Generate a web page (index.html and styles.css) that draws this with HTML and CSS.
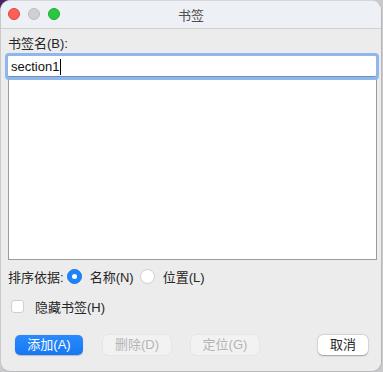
FILE: index.html
```html
<!DOCTYPE html>
<html lang="zh-CN">
<head>
<meta charset="utf-8">
<title>书签</title>
<link rel="stylesheet" href="styles.css">
</head>
<body>
<div class="window">
  <div class="titlebar">
    <div class="lights">
      <span class="light red"></span>
      <span class="light gray"></span>
      <span class="light green"></span>
    </div>
    <div class="title">书签</div>
  </div>
  <div class="content">
    <div class="label">书签名(B):</div>
    <div class="field"><span class="value">section1</span><span class="caret"></span></div>
    <div class="list"></div>
    <div class="sort-row">
      <span class="sort-label">排序依据:</span>
      <span class="radio checked"></span>
      <span class="opt">名称(N)</span>
      <span class="radio"></span>
      <span class="opt">位置(L)</span>
    </div>
    <div class="check-row">
      <span class="checkbox"></span>
      <span class="check-label">隐藏书签(H)</span>
    </div>
    <div class="buttons">
      <button class="btn primary">添加(A)</button>
      <button class="btn disabled">删除(D)</button>
      <button class="btn disabled">定位(G)</button>
      <button class="btn cancel">取消</button>
    </div>
  </div>
</div>
</body>
</html>
```
FILE: styles.css
```css
* { box-sizing: border-box; }
html, body {
  margin: 0;
  padding: 0;
  width: 383px;
  height: 372px;
  overflow: hidden;
  background: radial-gradient(circle at 0 0, #4b2166 7px, #c9c9cb 10px);
  font-family: "Liberation Sans", "Noto Sans CJK SC", sans-serif;
  font-size: 13px;
  color: #262626;
}
.window {
  width: 382px;
  height: 372px;
  background: #ececec;
  border: 1px solid #b9b9bb;
  border-top-color: #d6d6d8;
  border-left-color: #c9c9c9;
  border-radius: 10px;
  overflow: hidden;
  display: flex;
  flex-direction: column;
}
.titlebar {
  height: 28px;
  flex: none;
  background: #edf0f4;
  border-bottom: 1px solid #cfcfcf;
  position: relative;
  display: flex;
  align-items: center;
  justify-content: center;
}
.lights {
  position: absolute;
  left: 7px;
  top: 7px;
  display: flex;
  gap: 8px;
}
.light {
  width: 12px;
  height: 12px;
  border-radius: 50%;
  display: block;
}
.light.red { background: #fe5f57; border: 0.5px solid #e2463f; }
.light.gray { background: #d0d0d2; border: 0.5px solid #bdbdc0; }
.light.green { background: #29c840; border: 0.5px solid #1eab31; }
.title {
  font-size: 13px;
  color: #4d4d4d;
}
.content {
  flex: 1;
  display: flex;
  flex-direction: column;
  padding: 7px 0 0 0;
}
.label {
  height: 16px;
  line-height: 16px;
  padding-left: 7px;
  color: #262626;
}
.field {
  margin-top: 1px;
  margin-left: 4px;
  width: 374px;
  height: 27px;
  border: 3px solid #90b6ee;
  border-radius: 4px;
  background: #fff;
  display: flex;
  align-items: center;
  padding-left: 3px;
  position: relative;
  z-index: 1;
  box-shadow: inset 0 -1px 0 #6f8fbf;
}
.value {
  font-size: 13px;
  color: #111;
  line-height: 16px;
}
.caret {
  width: 1px;
  height: 16px;
  background: #000;
  margin-left: 1px;
}
.list {
  margin-left: 7px;
  margin-top: -1px;
  width: 369px;
  height: 181px;
  background: #fff;
  border: 1px solid #9b9b9b;
  border-top: none;
}
.sort-row {
  margin-top: 8px;
  height: 16px;
  display: flex;
  align-items: center;
  padding-left: 7px;
}
.sort-label { margin-right: 3px; }
.radio {
  width: 15px;
  height: 15px;
  border-radius: 50%;
  background: #fff;
  border: 1px solid #cfcfcf;
  margin-right: 8px;
  position: relative;
  flex: none;
}
.radio.checked {
  background: #1d83fb;
  border-color: #1a77e6;
}
.radio.checked::after {
  content: "";
  position: absolute;
  left: 4px;
  top: 4px;
  width: 5px;
  height: 5px;
  border-radius: 50%;
  background: #fff;
}
.opt { margin-right: 6px; }
.check-row {
  margin-top: 14px;
  height: 16px;
  display: flex;
  align-items: center;
  padding-left: 10px;
}
.checkbox {
  width: 13px;
  height: 13px;
  border-radius: 3px;
  background: #fff;
  border: 1px solid #cfcfcf;
  margin-right: 11px;
}
.buttons {
  margin-top: 21px;
  display: flex;
  gap: 20px;
  padding: 0 13px 0 14px;
}
.btn {
  height: 20px;
  border-radius: 5px;
  border: none;
  font-family: "Liberation Sans", "Noto Sans CJK SC", sans-serif;
  font-size: 13px;
  padding: 0;
  line-height: 20px;
}
.primary {
  width: 68px;
  background: linear-gradient(#2a8bfc, #1677f5);
  color: #fff;
  box-shadow: 0 0.5px 1px rgba(0,0,0,0.2);
}
.disabled {
  width: 68px;
  background: #f2f2f2;
  color: #b4b4b4;
  box-shadow: 0 0 0 0.5px rgba(0,0,0,0.06);
}
.cancel {
  width: 50px;
  margin-left: auto;
  background: #fff;
  color: #262626;
  box-shadow: 0 0.5px 1.5px rgba(0,0,0,0.3), 0 0 0 0.5px rgba(0,0,0,0.08);
}
```
